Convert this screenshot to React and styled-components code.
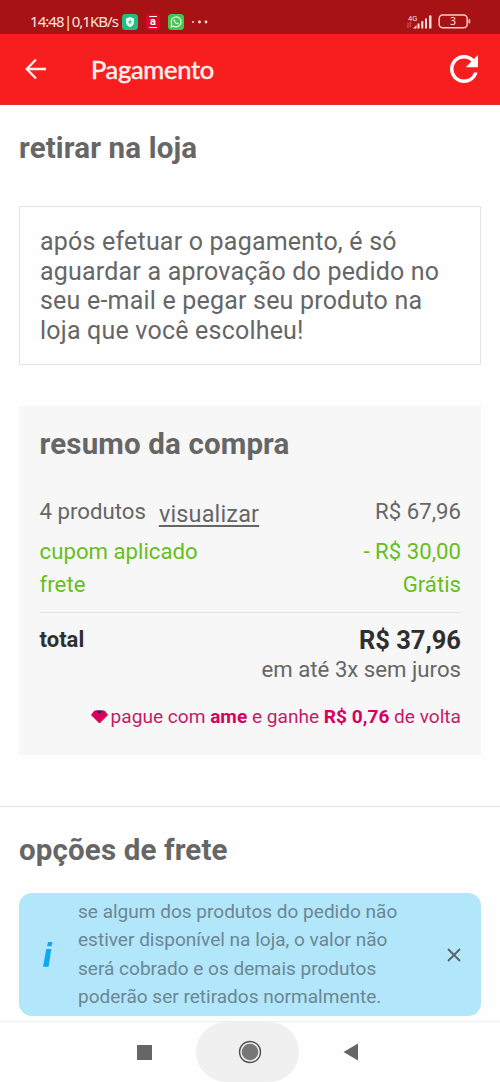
import React from 'react';
import styled, { createGlobalStyle } from 'styled-components';

const Global = createGlobalStyle`
  * { box-sizing: border-box; }
  body { margin: 0; background: #fefefe; font-family: Roboto, "Liberation Sans", sans-serif; color: #666; }
  p, h1, h2 { margin: 0; }
  svg { display: block; flex: none; }
`;

const Screen = styled.div`
  width: 500px;
  height: 1082px;
  display: flex;
  flex-direction: column;
  overflow: hidden;
  background: #fefefe;
`;

const StatusBar = styled.div`
  height: 34px;
  flex: none;
  padding: 8px 29px 0 30px;
  background: #a71314;
  color: #ffe3df;
  display: flex;
  justify-content: space-between;
`;

const StatusGroup = styled.div`
  height: 27px;
  display: flex;
  align-items: center;
  gap: ${p => p.$gap}px;
`;

const Clock = styled.div`
  width: 88px;
  margin-right: -4px;
  display: flex;
  justify-content: space-between;
  font: 400 15px/27px "Noto Sans", sans-serif;
  letter-spacing: -0.95px;
  white-space: nowrap;
`;

const Header = styled.header`
  height: 71px;
  flex: none;
  display: flex;
  align-items: center;
  padding: 0 22px 0 25px;
  background: #f81e1f;
  border-bottom: 1px solid #dc3030;
`;

const Title = styled.h1`
  flex: 1;
  margin-left: 44px;
  font: 400 25.5px/34px Lato, sans-serif;
  color: #fff0ec;
  -webkit-text-stroke: 0.5px #fff0ec;
  letter-spacing: -0.3px;
`;

const IconButton = styled.button`
  border: 0;
  padding: 0;
  background: none;
  display: flex;
`;

const Content = styled.main`
  flex: 1;
  min-height: 0;
`;

const Section = styled.section`
  padding: ${p => p.$top}px 19px 0;
`;

const Heading = styled.h2`
  font-size: 29.5px;
  line-height: 34px;
  font-weight: 700;
  color: #666;
  letter-spacing: 0.14px;
`;

const Notice = styled.p`
  margin-top: 41px;
  height: 159px;
  padding: 20px 20px 0;
  border: 1px solid #e5e5e5;
  font-size: 25px;
  line-height: 29.6px;
  letter-spacing: 0.2px;
  white-space: nowrap;
`;

const Summary = styled.div`
  margin-top: 41px;
  height: 349px;
  padding: 21px 20px 0 20.6px;
  background: #f7f7f7;
`;

const Row = styled.div`
  height: ${p => p.$h}px;
  margin-top: ${p => p.$top || 0}px;
  display: flex;
  justify-content: space-between;
  align-items: flex-start;
  font-size: 22.2px;
  line-height: 34px;
  color: ${p => p.$color || '#666'};
`;

const ViewLink = styled.a`
  display: inline-block;
  margin: 3px 0 0 13px;
  font-size: 23.5px;
  line-height: 34px;
  vertical-align: top;
  text-decoration: underline;
  text-decoration-thickness: 1.5px;
  text-underline-offset: 3px;
  letter-spacing: 0.15px;
`;

const Total = styled.div`
  margin-top: 11px;
  border-top: 1px solid #e5e5e5;
  padding-top: 12px;
  display: flex;
  justify-content: space-between;
  color: #2f2f2f;
  font-size: 22px;
  line-height: 30px;
  font-weight: 700;
`;

const Amount = styled.div`
  text-align: right;
  font-size: 25.5px;
  line-height: 31px;
`;

const Installments = styled.div`
  font-size: 22.2px;
  line-height: 26px;
  font-weight: 400;
  color: #666;
`;

const Cashback = styled.div`
  margin-top: 21px;
  display: flex;
  justify-content: flex-end;
  align-items: center;
  gap: 3px;
  font-size: 19.1px;
  line-height: 28px;
  color: #c51b68;
  white-space: nowrap;
  b { color: #d8005f; }
`;

const Divider = styled.div`
  height: 1px;
  margin-top: 51px;
  background: #e5e5e5;
`;

const InfoBox = styled.div`
  margin-top: 26px;
  height: 123px;
  border-radius: 13px;
  background: #b2e6fb;
  padding: 0 20px 0 23px;
  display: flex;
  align-items: center;
`;

const InfoText = styled.p`
  flex: 1;
  margin: 0 0 0 23px;
  font-size: 19.05px;
  line-height: 28.2px;
  color: #6b8793;
  white-space: nowrap;
`;

const NavBar = styled.nav`
  height: 61px;
  flex: none;
  border-top: 1px solid #eaf0ee;
  display: flex;
  align-items: center;
  padding-left: 137px;
  gap: 44px;
  background: #fefefe;
`;

const HomeKey = styled.div`
  width: 103px;
  height: 60px;
  border-radius: 30px;
  background: #f0f0f0;
  display: flex;
  align-items: center;
  justify-content: center;
  padding-left: 4px;
`;

const ShieldIcon = () => (
  <svg width="16" height="16" viewBox="0 0 16 16">
    <rect width="16" height="16" rx="3.5" fill="#22bd82" />
    <path d="M8 3 12 4.5V8c0 2.4-1.6 4.3-4 5.2C5.6 12.3 4 10.4 4 8V4.5Z" fill="#e9fff6" />
    <path d="M8.7 5 6 8.6h1.7L7.3 11 10 7.5H8.3Z" fill="#22bd82" />
  </svg>
);

const StoreBadge = styled.span`
  width: 14px;
  height: 16px;
  border-radius: 3px;
  background: #dc0524;
  display: flex;
  align-items: center;
  justify-content: center;
`;

const StoreLetter = styled.span`
  width: 8px;
  height: 12px;
  border: solid #fff;
  border-width: 1px 0;
  font: 700 11px/9px Roboto, sans-serif;
  text-align: center;
  color: #fff;
`;

const ChatIcon = () => (
  <svg width="16" height="16" viewBox="0 0 16 16">
    <rect width="16" height="16" rx="3.5" fill="#43c653" />
    <path d="M3 13 3.8 10.3A5 5 0 1 1 5.7 12.2Z" fill="none" stroke="#f4fff4" strokeWidth="1.1" strokeLinejoin="round" />
    <path d="M6.2 5.3c-.8.5-.7 1.5 0 2.6s1.8 2.1 2.9 2.3 1.6-.3 1.6-1l-1.3-.7-.7.6c-.8-.3-1.5-1-1.8-1.7l.5-.7Z" fill="#fff" />
  </svg>
);

const SignalIcon = () => (
  <svg width="27" height="16" viewBox="0 0 27 16">
    <path d="M2 8.5v5M.8 12.2 2 13.5M4.2 13.500v-5l1.100 1.300" stroke="#d9716d" strokeWidth=".8" fill="none" />
    <path d="M7 14.5 10.5 11v3.5ZM11.5 9.5h2v5h-2ZM15.3 7h2v7.5h-2ZM19 4.5h2v10h-2ZM23 1.5h2.5v13H23Z" fill="#ffdeda" />
    <text x="2" y="6.8" fontFamily="Roboto" fontSize="7.5" fill="#ffdeda">4G</text>
  </svg>
);

const BatteryIcon = () => (
  <svg width="33" height="15" viewBox="0 0 33 15">
    <rect x="1.2" y="1" width="28" height="12.8" rx="3.5" fill="none" stroke="#ffc9c5" strokeWidth="1.5" />
    <path d="M30.5 5.3h1.7v4h-1.7Z" fill="#ffc9c5" />
    <text x="15" y="11.3" textAnchor="middle" fontFamily="Noto Sans" fontSize="10.5" fill="#ffe3df">3</text>
  </svg>
);

const BackArrow = () => (
  <svg width="22" height="22" viewBox="0 0 22 22">
    <path d="M21 11H2M11 1.5 1.7 11 11 20.5" fill="none" stroke="#fff0ec" strokeWidth="2.3" />
  </svg>
);

const Reload = () => (
  <svg width="28" height="28" viewBox="4 4 16 16">
    <path d="M17.65 6.35A7.958 7.958 0 0 0 12 4c-4.42 0-7.99 3.58-7.99 8s3.57 8 7.99 8c3.73 0 6.84-2.55 7.73-6h-2.08A5.99 5.99 0 0 1 12 18c-3.31 0-6-2.69-6-6s2.69-6 6-6c1.66 0 3.14.69 4.22 1.78L13 11h7V4z" fill="#fff" />
  </svg>
);

const Gem = () => (
  <svg width="17" height="14" viewBox="0 0 17 14">
    <path d="M3.5 1h10L16.5 5 8.5 13 .5 5Z" fill="#d9005c" stroke="#d9005c" strokeLinejoin="round" />
    <path d="M5 .5h7L8.5 3.8Z" fill="#3b1876" />
  </svg>
);

const InfoIcon = () => (
  <svg width="13" height="27" viewBox="0 0 13 27">
    <path d="M6 1h4.500L9.600 5.300H5.100ZM4.300 8H9.300L6.600 25.700H1Z" fill="#0ea9f0" />
  </svg>
);

const CloseIcon = () => (
  <svg width="14" height="14" viewBox="0 0 14 14">
    <path d="M1 1 13 13M13 1 1 13" stroke="#54656d" strokeWidth="1.9" />
  </svg>
);

export default function App() {
  return (
    <Screen>
      <Global />
      <StatusBar>
        <StatusGroup $gap={8}>
          <Clock><span>14:48</span><span>|</span><span>0,1KB/s</span></Clock>
          <ShieldIcon />
          <StoreBadge><StoreLetter>a</StoreLetter></StoreBadge>
          <ChatIcon />
          <svg width="17" height="4" viewBox="0 0 17 4" fill="#ffe3df">
            <circle cx="1" cy="2" r="1" /><circle cx="7.5" cy="2" r="1.4" /><circle cx="14" cy="2" r="1.4" />
          </svg>
        </StatusGroup>
        <StatusGroup $gap={5}>
          <SignalIcon />
          <BatteryIcon />
        </StatusGroup>
      </StatusBar>
      <Header>
        <IconButton aria-label="Voltar"><BackArrow /></IconButton>
        <Title>Pagamento</Title>
        <IconButton aria-label="Recarregar"><Reload /></IconButton>
      </Header>
      <Content>
        <Section $top={26}>
          <Heading>retirar na loja</Heading>
          <Notice>
            após efetuar o pagamento, é só<br />
            aguardar a aprovação do pedido no<br />
            seu e-mail e pegar seu produto na<br />
            loja que você escolheu!
          </Notice>
          <Summary>
            <Heading>resumo da compra</Heading>
            <Row $top={33} $h={40}>
              <span>4 produtos<ViewLink>visualizar</ViewLink></span>
              <span>R$ 67,96</span>
            </Row>
            <Row $h={33} $color="#66bf1b">
              <span>cupom aplicado</span>
              <span>- R$ 30,00</span>
            </Row>
            <Row $h={34} $color="#66bf1b">
              <span>frete</span>
              <span>Grátis</span>
            </Row>
            <Total>
              <span>total</span>
              <Amount>
                R$ 37,96
                <Installments>em até 3x sem juros</Installments>
              </Amount>
            </Total>
            <Cashback>
              <Gem />
              <span>pague com <b>ame</b> e ganhe <b>R$ 0,76</b> de volta</span>
            </Cashback>
          </Summary>
        </Section>
        <Divider />
        <Section $top={26}>
          <Heading>opções de frete</Heading>
          <InfoBox>
            <InfoIcon />
            <InfoText>
              se algum dos produtos do pedido não<br />
              estiver disponível na loja, o valor não<br />
              será cobrado e os demais produtos<br />
              poderão ser retirados normalmente.
            </InfoText>
            <IconButton aria-label="Fechar"><CloseIcon /></IconButton>
          </InfoBox>
        </Section>
      </Content>
      <NavBar>
        <svg width="15" height="15"><rect width="15" height="15" fill="#666" /></svg>
        <HomeKey>
          <svg width="24" height="24" viewBox="0 0 24 24">
            <circle cx="12" cy="12" r="10.5" fill="none" stroke="#555" strokeWidth="1.4" />
            <circle cx="12" cy="12" r="8.3" fill="#777" />
          </svg>
        </HomeKey>
        <svg width="16" height="18" viewBox="0 0 16 18"><path d="M.5 9 15 .5v17Z" fill="#666" /></svg>
      </NavBar>
    </Screen>
  );
}
